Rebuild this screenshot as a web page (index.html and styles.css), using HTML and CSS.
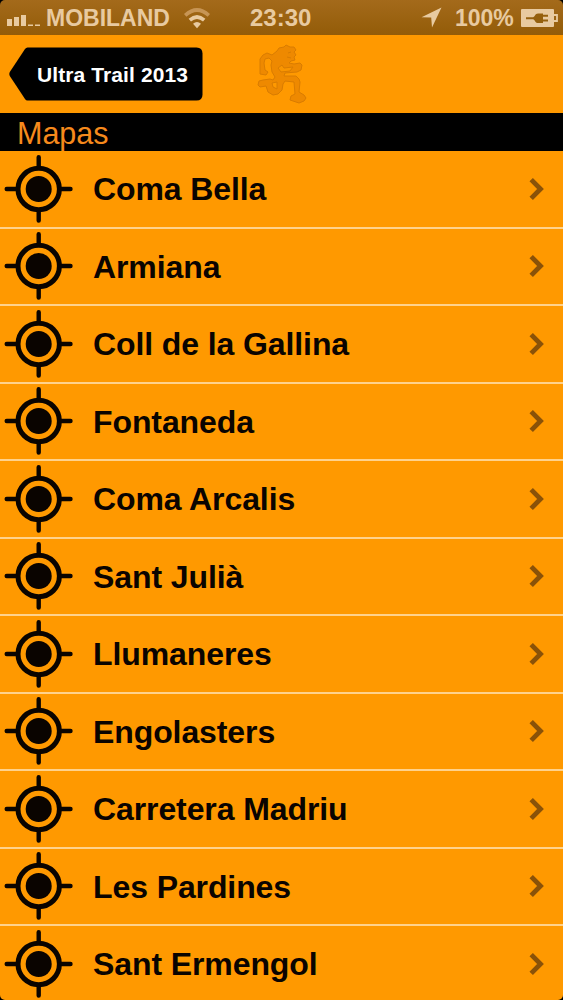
FILE: index.html
```
<!DOCTYPE html>
<html lang="es">
<head>
    <meta charset="UTF-8">
    <meta name="viewport" content="width=device-width, initial-scale=1.0">
    <title>Ultra Trail 2013 - Mapas</title>
    <link rel="stylesheet" href="styles.css">
</head>
<body>
    <svg class="defs" width="0" height="0">
        <symbol id="target" viewBox="0 0 70 70">
            <g fill="none" stroke="#0a0400" stroke-linecap="round">
                <circle cx="34.700" cy="35" r="20.700" stroke-width="5"/>
                <path stroke-width="4.400" d="M34.700 3.200v9M34.700 58v8.600M2.700 35h9M57.500 35h9"/>
            </g>
            <circle cx="34.700" cy="35" r="13" fill="#0a0400"/>
        </symbol>
        <symbol id="chevron" viewBox="0 0 18 24">
            <path d="M3.200 2.600l9.300 9.400-9.300 9.400" fill="none" stroke="#8a5208" stroke-width="4.800"/>
        </symbol>
    </svg>

    <div class="status-bar">
        <svg class="signal" width="34" height="14" viewBox="0 0 34 14">
            <path d="M0 6h5v7H0zM7 4h5v9H7zM14 2h5v11h-5zM21 11.500h5V13h-5zM28 11.500h5V13h-5z" fill="#e8caa0"/>
        </svg>
        <span class="carrier">MOBILAND</span>
        <svg class="wifi" width="28" height="22" viewBox="0 0 28 22">
            <g fill="none" stroke-width="3.600">
                <path d="M2.200 8.300q11.800-10.600 23.600 0" stroke="#c79555"/>
                <path d="M6.800 13.200q7.200-6.400 14.400 0" stroke="#e8caa0"/>
            </g>
            <path d="M10 16.800q4-3.600 8 0l-4 4.400z" fill="#e8caa0"/>
        </svg>
        <span class="clock">23:30</span>
        <svg class="location" width="21" height="21" viewBox="0 0 21 21">
            <path d="M20.500.5L11 20.500l-.8-9.900L.5 10.300z" fill="#e8caa0"/>
        </svg>
        <span class="percent">100%</span>
        <svg class="battery" width="38" height="18" viewBox="0 0 38 18">
            <path d="M1 0h31q1 0 1 1v16q0 1-1 1H1q-1 0-1-1V1q0-1 1-1z" fill="#e8caa0"/>
            <path d="M33 6h3v6h-3" fill="none" stroke="#e8caa0" stroke-width="1.800"/>
            <path d="M5 8.200h7c2-.2 2-3.700 5-3.700h5v1.300h5v2h-5v2.700h5v2h-5v1.500h-5c-3 0-3-3.600-5-3.800H5z" fill="#95600d"/>
        </svg>
    </div>

    <div class="navbar">
        <a class="back" href="#">
            <svg class="back-shape" width="194" height="54" viewBox="0 0 194 54">
                <path d="M18.500.5h169q6 0 6 6v41q0 6-6 6h-169q-1.500 0-2.500-1.500L.8 29q-1-2 0-4L16 2q1-1.500 2.500-1.500z"/>
            </svg>
            <span>Ultra Trail 2013</span>
        </a>
        <svg class="runner" width="52" height="60" viewBox="0 0 52 60">
            <g stroke="#d97c00" stroke-width="1" stroke-linejoin="round">
                <path fill="#ee8900" d="M20 7L22 4L27 3L29 1L33 3L37 3L39 6L37 8L39 11L37 13L38 16L34 17L32 19L37 20L43 19L45 21L44 26L40 28L28 29L27 32L39 32L42 35L43 38L42 48L47 51L49 54L47 57L42 59L33 56L34 52L38 50L37 38L28 37L26 40L25 46L21 50L16 51L11 48L9 42L3 43L1 41L2 37L6 36L13 35L16 36L18 33L15 28L14 21L15 17L12 14L8 15L7 19L8 26L11 28L9 31L3 30L3 15L6 11L10 9L15 11Z"/>
                <path fill="#f99500" d="M21 24L25 21L27 24L36 23L33 27L24 28Z"/>
                <path fill="#ff9900" d="M15 39L20 38L20 45L16 43Z"/>
            </g>
            <path d="M31 9l3-1M30 13l4 1" stroke="#d97c00"/>
        </svg>
    </div>

    <h1 class="section-title">Mapas</h1>

    <ul class="map-list">
        <li><svg class="target"><use href="#target"/></svg><span>Coma Bella</span><svg class="chevron"><use href="#chevron"/></svg></li>
        <li><svg class="target"><use href="#target"/></svg><span>Armiana</span><svg class="chevron"><use href="#chevron"/></svg></li>
        <li><svg class="target"><use href="#target"/></svg><span>Coll de la Gallina</span><svg class="chevron"><use href="#chevron"/></svg></li>
        <li><svg class="target"><use href="#target"/></svg><span>Fontaneda</span><svg class="chevron"><use href="#chevron"/></svg></li>
        <li><svg class="target"><use href="#target"/></svg><span>Coma Arcalis</span><svg class="chevron"><use href="#chevron"/></svg></li>
        <li><svg class="target"><use href="#target"/></svg><span>Sant Julià</span><svg class="chevron"><use href="#chevron"/></svg></li>
        <li><svg class="target"><use href="#target"/></svg><span>Llumaneres</span><svg class="chevron"><use href="#chevron"/></svg></li>
        <li><svg class="target"><use href="#target"/></svg><span>Engolasters</span><svg class="chevron"><use href="#chevron"/></svg></li>
        <li><svg class="target"><use href="#target"/></svg><span>Carretera Madriu</span><svg class="chevron"><use href="#chevron"/></svg></li>
        <li><svg class="target"><use href="#target"/></svg><span>Les Pardines</span><svg class="chevron"><use href="#chevron"/></svg></li>
        <li><svg class="target"><use href="#target"/></svg><span>Sant Ermengol</span><svg class="chevron"><use href="#chevron"/></svg></li>
    </ul>
</body>
</html>
```
FILE: styles.css
```
:root {
    --orange: #ff9900;
    --status-text: #e8caa0;
}

* {
    box-sizing: border-box;
}

body {
    margin: 0;
    height: 1000px;
    overflow: hidden;
    display: flex;
    flex-direction: column;
    background: #000;
    font-family: "Liberation Sans", Arial, sans-serif;
}

svg {
    display: block;
    flex-shrink: 0;
}

.defs {
    position: absolute;
}

.status-bar {
    flex: 0 0 35px;
    display: flex;
    align-items: center;
    padding-left: 7px;
    border-radius: 5px 5px 0 0;
    background: linear-gradient(#a46a1b, #935c08);
    color: var(--status-text);
    font-size: 23px;
    font-weight: bold;
    white-space: nowrap;
}

.signal {
    margin-top: 5px;
}

.carrier {
    width: 124px;
    margin-left: 5px;
    padding-top: 1px;
}

.wifi {
    margin-left: 13px;
}

.clock {
    width: 64px;
    margin-left: 39px;
    font-size: 24px;
}

.location {
    margin-left: 107px;
}

.percent {
    width: 60px;
    margin-left: 13px;
    padding-top: 1px;
}

.battery {
    margin-left: 6px;
}

.navbar {
    flex: 0 0 78px;
    display: flex;
    align-items: flex-start;
    padding: 12px 0 0 9px;
    background: var(--orange);
}

.back {
    display: grid;
    align-items: center;
    color: #fff;
    font-size: 21px;
    font-weight: bold;
    letter-spacing: 0.1px;
    text-decoration: none;
    white-space: nowrap;
}

.back-shape,
.back span {
    grid-area: 1 / 1;
}

.back span {
    padding: 1px 0 0 28px;
}

.runner {
    margin: -3px 0 0 54px;
}

.section-title {
    flex: 0 0 38px;
    min-height: 0;
    margin: 0;
    padding-left: 17px;
    color: #f68a1c;
    font-size: 30.5px;
    font-weight: normal;
    line-height: 40px;
}

.map-list {
    flex: 0 0 849px;
    margin: 0;
    padding: 0;
    overflow: hidden;
    list-style: none;
    background: var(--orange);
    border-radius: 0 0 5px 5px;
}

.map-list li {
    height: 77.5px;
    display: flex;
    align-items: center;
    padding: 0 17px 0 4px;
    border-bottom: 2px solid #ffd28c;
    font-size: 32px;
    font-weight: bold;
    letter-spacing: -0.1px;
    color: #0a0400;
}

.map-list li:last-child {
    border-bottom-color: transparent;
}

.target {
    width: 70px;
    height: 70px;
}

.map-list span {
    flex: 1;
    margin-left: 19px;
    padding-top: 2px;
}

.chevron {
    width: 18px;
    height: 24px;
}
```
